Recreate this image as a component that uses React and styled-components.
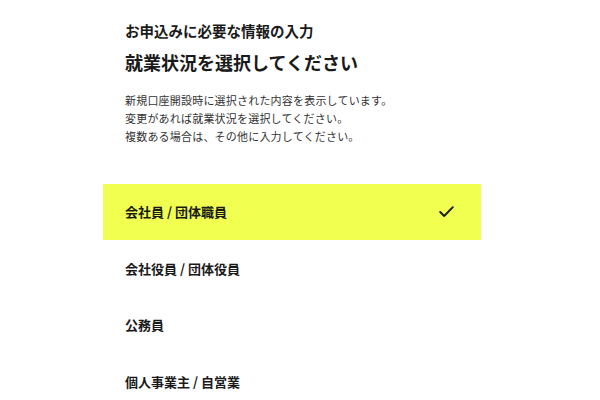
import React from "react";
import styled, { createGlobalStyle } from "styled-components";

const GlobalStyle = createGlobalStyle`
  html, body { margin: 0; padding: 0; background: #ffffff; }
  body {
    font-family: "Noto Sans CJK JP", "Noto Sans", sans-serif;
    color: #1a1a1a;
    -webkit-font-smoothing: antialiased;
  }
`;

const Page = styled.div`
  width: 600px;
  height: 400px;
  overflow: hidden;
  padding-left: 103px;
  box-sizing: border-box;
`;

const Column = styled.div`
  width: 378px;
  display: flex;
  flex-direction: column;
`;

const Header = styled.header`
  padding: 20px 22px 0;
  display: flex;
  flex-direction: column;
  align-items: flex-start;
`;

const Eyebrow = styled.h2`
  margin: 0;
  font-size: 14.5px;
  line-height: 22px;
  font-weight: 700;
  color: #1a1a1a;
`;

const Title = styled.h1`
  margin: 6px 0 0;
  font-size: 18px;
  line-height: 28px;
  font-weight: 700;
  color: #1a1a1a;
`;

const Description = styled.p`
  margin: 15px 0 0;
  font-size: 11px;
  line-height: 18px;
  letter-spacing: 0.2px;
  color: #333333;
`;

const List = styled.ul`
  list-style: none;
  margin: 39px 0 0;
  padding: 0;
  display: flex;
  flex-direction: column;
`;

const Option = styled.li`
  height: ${(p) => (p.$selected ? "56px" : "56.5px")};
  margin-bottom: ${(p) => (p.$selected ? "0.5px" : "0")};
  padding: 0 27px 0 22px;
  display: flex;
  align-items: center;
  justify-content: space-between;
  background: ${(p) => (p.$selected ? "#f0ff50" : "transparent")};
  font-size: 13px;
  line-height: 20px;
  font-weight: 700;
  color: #1a1a1a;
`;

const Label = styled.span`
  white-space: nowrap;
`;

const Check = () => (
  <svg width="15" height="12" viewBox="0 0 15 12" fill="none">
    <polyline
      points="1.2,6 5.2,10 13.8,1.2"
      stroke="#1a1a1a"
      strokeWidth="1.9"
      strokeLinecap="round"
      strokeLinejoin="round"
    />
  </svg>
);

const options = [
  { label: "会社員 / 団体職員", selected: true },
  { label: "会社役員 / 団体役員" },
  { label: "公務員" },
  { label: "個人事業主 / 自営業" },
];

export default function App() {
  return (
    <>
      <GlobalStyle />
      <Page>
        <Column>
          <Header>
            <Eyebrow>お申込みに必要な情報の入力</Eyebrow>
            <Title>就業状況を選択してください</Title>
            <Description>
              新規口座開設時に選択された内容を表示しています。
              <br />
              変更があれば就業状況を選択してください。
              <br />
              複数ある場合は、その他に入力してください。
            </Description>
          </Header>
          <List>
            {options.map((o) => (
              <Option key={o.label} $selected={o.selected}>
                <Label>{o.label}</Label>
                {o.selected && <Check />}
              </Option>
            ))}
          </List>
        </Column>
      </Page>
    </>
  );
}
